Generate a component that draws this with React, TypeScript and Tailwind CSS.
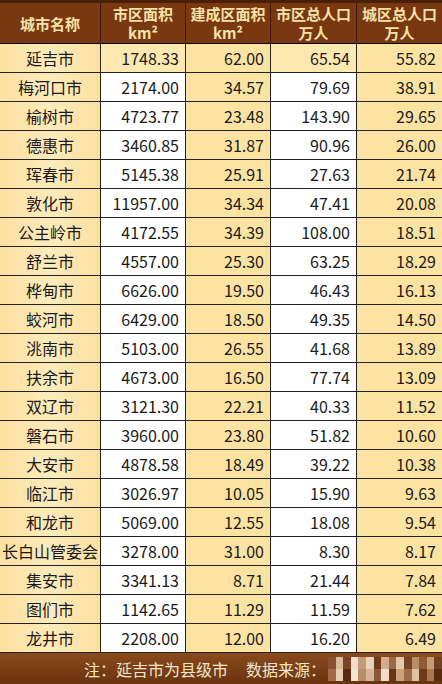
import React from 'react';

type Row = [string, string, string, string, string];

const rows: Row[] = [
  ['延吉市', '1748.33', '62.00', '65.54', '55.82'],
  ['梅河口市', '2174.00', '34.57', '79.69', '38.91'],
  ['榆树市', '4723.77', '23.48', '143.90', '29.65'],
  ['德惠市', '3460.85', '31.87', '90.96', '26.00'],
  ['珲春市', '5145.38', '25.91', '27.63', '21.74'],
  ['敦化市', '11957.00', '34.34', '47.41', '20.08'],
  ['公主岭市', '4172.55', '34.39', '108.00', '18.51'],
  ['舒兰市', '4557.00', '25.30', '63.25', '18.29'],
  ['桦甸市', '6626.00', '19.50', '46.43', '16.13'],
  ['蛟河市', '6429.00', '18.50', '49.35', '14.50'],
  ['洮南市', '5103.00', '26.55', '41.68', '13.89'],
  ['扶余市', '4673.00', '16.50', '77.74', '13.09'],
  ['双辽市', '3121.30', '22.21', '40.33', '11.52'],
  ['磐石市', '3960.00', '23.80', '51.82', '10.60'],
  ['大安市', '4878.58', '18.49', '39.22', '10.38'],
  ['临江市', '3026.97', '10.05', '15.90', '9.63'],
  ['和龙市', '5069.00', '12.55', '18.08', '9.54'],
  ['长白山管委会', '3278.00', '31.00', '8.30', '8.17'],
  ['集安市', '3341.13', '8.71', '21.44', '7.84'],
  ['图们市', '1142.65', '11.29', '11.59', '7.62'],
  ['龙井市', '2208.00', '12.00', '16.20', '6.49'],
];

const font = { fontFamily: '"Noto Sans CJK SC", "Open Sans", sans-serif' };

// blurred source credit in the footer, drawn as mosaic blocks
const mosaic = [
  ['#8a5030', '#d8b89c', '#7a4424', '#f0dcc8', '#c49a78', '#e9d2bb', '#6e3a1a', '#d2ae8e', '#9b6a48', '#e3c7ab', '#7a4424', '#b98d68', '#8f5c38', '#c69b76', '#704020'],
  ['#a06a48', '#e6cdb5', '#5a2a10', '#f4e4d2', '#b98d68', '#d7b597', '#8a5a3a', '#f0dcc8', '#6b3414', '#c9a27e', '#9b6a48', '#e0c2a4', '#6e3a1a', '#a8784f', '#5a2a10'],
];

export default function App() {
  return (
    <div className="w-[442px] h-[684px] bg-[#5a2a0c] overflow-hidden relative" style={font}>
      <div className="h-[3px] bg-[#4a1f08]" />
      <div className="grid grid-cols-[101px_85px_85px_86px_85px] h-[41px] bg-[#79380f] text-[#f6e2aa] font-bold text-[15px] leading-[19px] border-b border-black">
        <div className="flex items-center justify-center border-r border-[#3a1806]">城市名称</div>
        <div className="flex flex-col items-center justify-center border-r border-[#3a1806]"><span>市区面积</span><span>km²</span></div>
        <div className="flex flex-col items-center justify-center border-r border-[#3a1806]"><span>建成区面积</span><span>km²</span></div>
        <div className="flex flex-col items-center justify-center border-r border-[#3a1806]"><span>市区总人口</span><span>万人</span></div>
        <div className="flex flex-col items-center justify-center"><span>城区总人口</span><span>万人</span></div>
      </div>
      {rows.map((r, i) => {
        const hl = i === 0;
        return (
          <div key={r[0]} className="grid grid-cols-[101px_85px_85px_86px_85px] h-[29px] text-[16px] text-[#1a1a1a] border-b border-[#222]">
            <div className="flex items-center justify-center bg-gradient-to-r from-[#fbe0a0] via-[#fdebbb] to-[#fbe0a0] border-r border-[#222] whitespace-nowrap">{r[0]}</div>
            <div className={`flex items-center justify-end pr-[6px] border-r border-[#222] ${hl ? 'bg-[#fde8b0]' : 'bg-white'}`}>{r[1]}</div>
            <div className="flex items-center justify-end pr-[6px] border-r border-[#222] bg-[#fde3a2]">{r[2]}</div>
            <div className={`flex items-center justify-end pr-[6px] border-r border-[#222] ${hl ? 'bg-[#fde8b0]' : 'bg-white'}`}>{r[3]}</div>
            <div className="flex items-center justify-end pr-[6px] bg-[#fde3a2]">{r[4]}</div>
          </div>
        );
      })}
      <div className="h-[31px] bg-gradient-to-b from-[#8a4a1c] to-[#6a3310] flex items-center pl-[84px] text-[#f5e6cc] text-[16px] whitespace-nowrap">
        <span>注：延吉市为县级市</span>
        <span className="ml-[18px]">数据来源：</span>
        <div className="ml-[2px] flex flex-col h-[24px] flex-1">
          {mosaic.map((line, j) => (
            <div key={j} className="flex flex-1">
              {line.map((c, i) => (
                <div key={i} className="flex-1 h-full" style={{ backgroundColor: c }} />
              ))}
            </div>
          ))}
        </div>
      </div>
    </div>
  );
}
